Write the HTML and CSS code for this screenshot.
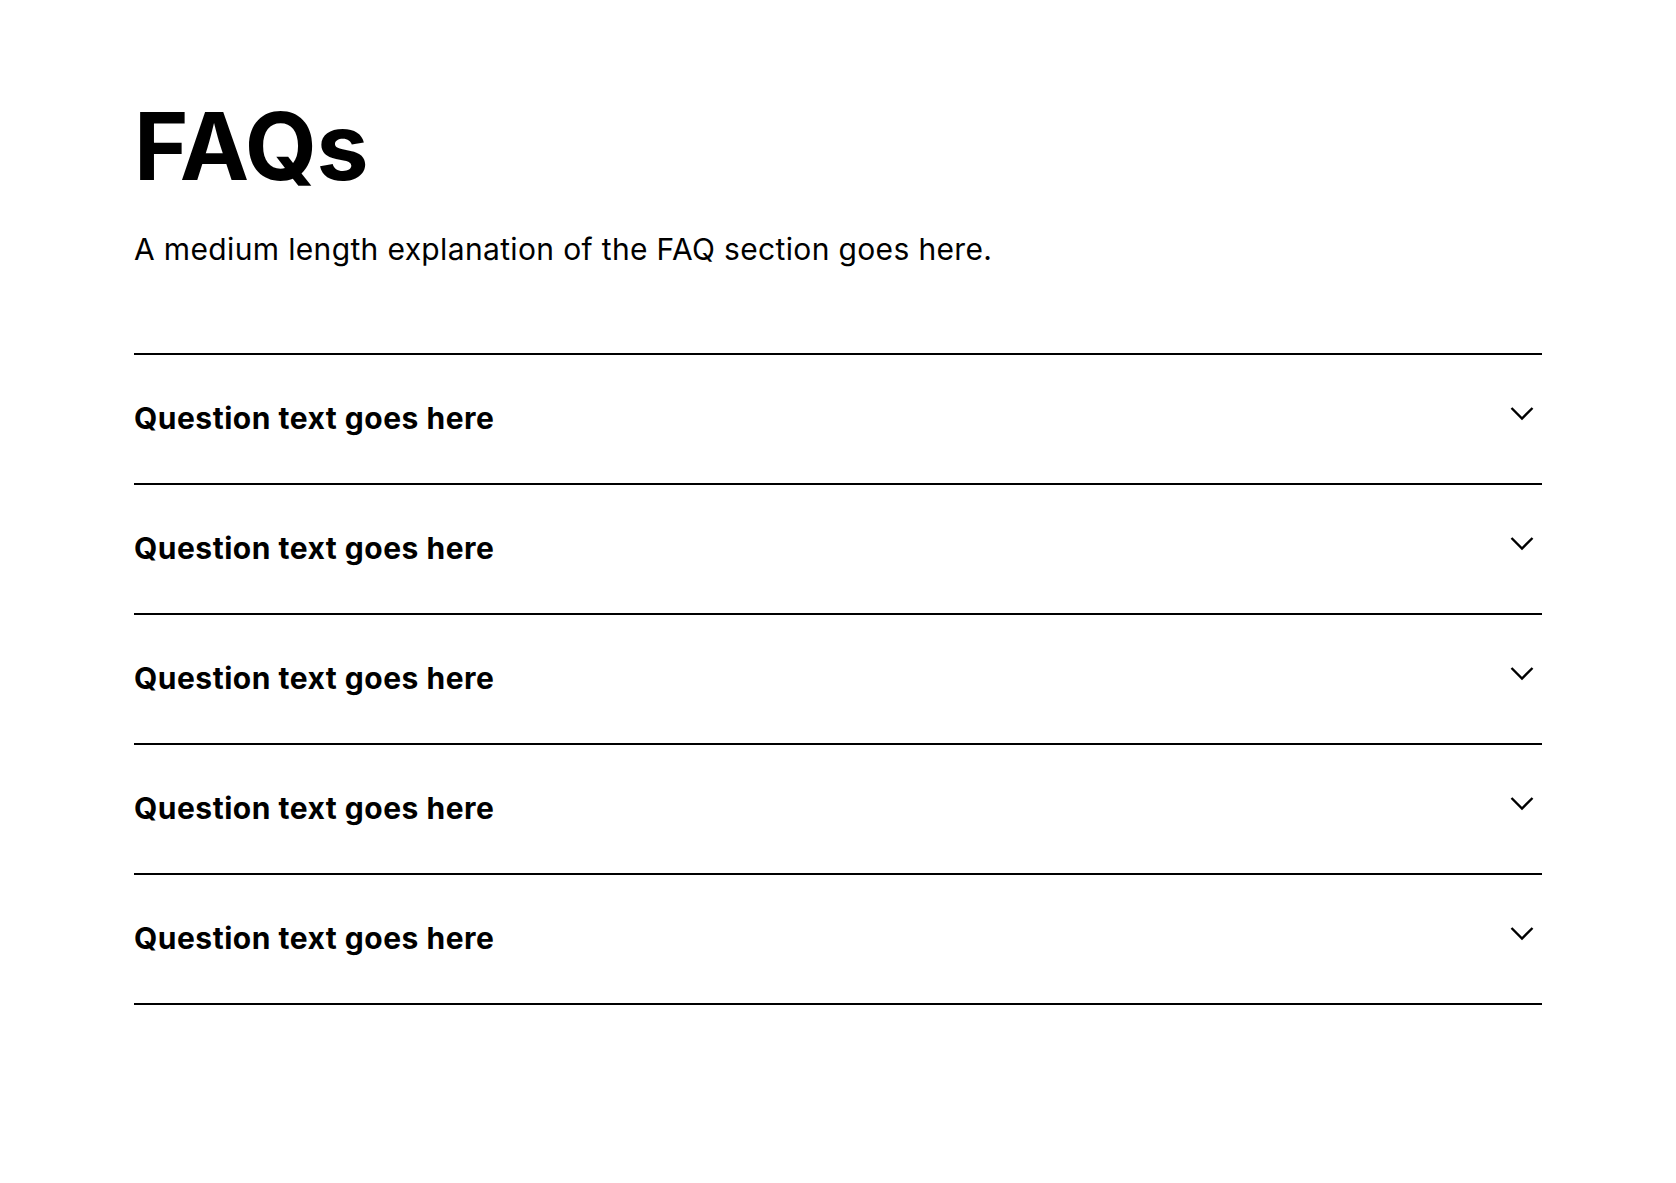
FILE: index.html
```html
<!DOCTYPE html>
<html lang="en">
  <head>
    <meta charset="UTF-8" />
    <meta name="viewport" content="width=device-width, initial-scale=1.0" />
    <title>FAQs</title>
    <link rel="stylesheet" href="styles.css">
  </head>
  <body>
    <section class="faq">
      <header class="faq-header">
        <h1>FAQs</h1>
        <p>A medium length explanation of the FAQ section goes here.</p>
      </header>

      <div class="faq-list">
        <div class="faq-item">
          <span class="question">Question text goes here</span>
          <svg class="chevron" width="40" height="40" viewBox="0 0 40 40">
            <path d="M9.5 12 L20 22.5 L30.5 12" />
          </svg>
        </div>
        <div class="faq-item">
          <span class="question">Question text goes here</span>
          <svg class="chevron" width="40" height="40" viewBox="0 0 40 40">
            <path d="M9.5 12 L20 22.5 L30.5 12" />
          </svg>
        </div>
        <div class="faq-item">
          <span class="question">Question text goes here</span>
          <svg class="chevron" width="40" height="40" viewBox="0 0 40 40">
            <path d="M9.5 12 L20 22.5 L30.5 12" />
          </svg>
        </div>
        <div class="faq-item">
          <span class="question">Question text goes here</span>
          <svg class="chevron" width="40" height="40" viewBox="0 0 40 40">
            <path d="M9.5 12 L20 22.5 L30.5 12" />
          </svg>
        </div>
        <div class="faq-item">
          <span class="question">Question text goes here</span>
          <svg class="chevron" width="40" height="40" viewBox="0 0 40 40">
            <path d="M9.5 12 L20 22.5 L30.5 12" />
          </svg>
        </div>
      </div>
    </section>
  </body>
</html>
```

FILE: styles.css
```css
body {
  font-family: "Inter", "Roboto", sans-serif;
  margin: 0;
  padding: 0;
  background-color: #fff;
  color: #000;
}

.faq {
  padding: 91px 134px 120px;
}

.faq-header h1 {
  font-size: 93px;
  font-weight: 700;
  line-height: 1.2;
  letter-spacing: -0.5px;
  margin: 0;
}

.faq-header p {
  font-size: 30px;
  line-height: 1.5;
  letter-spacing: 0.35px;
  margin: 24px 0 0;
}

.faq-list {
  margin-top: 81px;
  border-bottom: 2px solid #000;
}

.faq-item {
  display: flex;
  align-items: center;
  justify-content: space-between;
  height: 128px;
  border-top: 2px solid #000;
}

.question {
  font-size: 30px;
  font-weight: 700;
  line-height: 1.5;
  letter-spacing: 0.5px;
}

.chevron {
  flex-shrink: 0;
  margin-top: -5px;
}

.chevron path {
  fill: none;
  stroke: #000;
  stroke-width: 2.4;
}
```
